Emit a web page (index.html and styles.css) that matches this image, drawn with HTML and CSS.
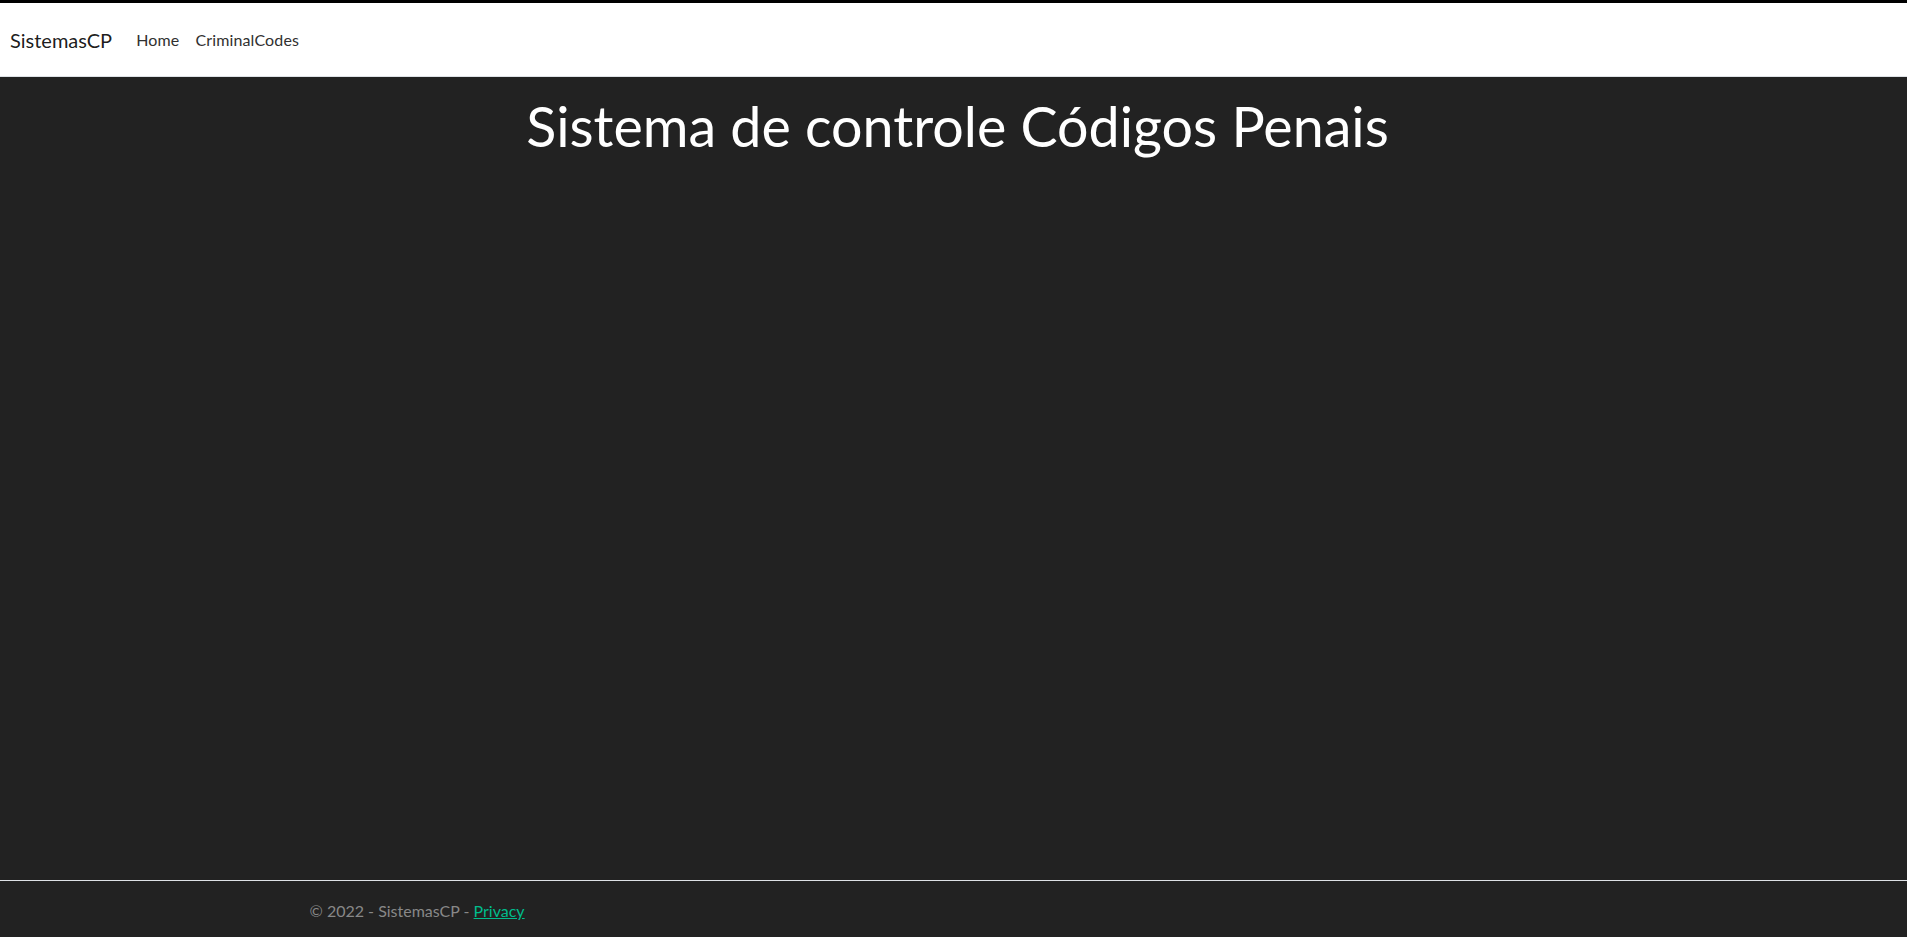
FILE: index.html
```html
<!DOCTYPE html>
<html lang="pt-br">
<head>
<meta charset="utf-8">
<title>SistemasCP</title>
<link rel="stylesheet" href="styles.css">
</head>
<body>
<div class="page">
  <div class="topstrip"></div>
  <header class="navbar">
    <div class="navbar-inner">
      <a class="brand" href="#">SistemasCP</a>
      <nav class="nav">
        <a class="nav-link" href="#">Home</a>
        <a class="nav-link" href="#">CriminalCodes</a>
      </nav>
    </div>
  </header>
  <main class="main">
    <div class="text-center">
      <h1 class="display">Sistema de controle Códigos Penais</h1>
    </div>
  </main>
  <footer class="footer">
    <div class="container">&copy; 2022 - SistemasCP - <a class="privacy" href="#">Privacy</a></div>
  </footer>
</div>
</body>
</html>
```

FILE: styles.css
```css
* { box-sizing: border-box; }
html, body {
  margin: 0;
  padding: 0;
  height: 100%;
  overflow: hidden;
}
body {
  background: #222222;
  color: #ffffff;
  font-family: Lato, "Liberation Sans", sans-serif;
  font-size: 16px;
  line-height: 1.5;
}
.page {
  display: flex;
  flex-direction: column;
  height: 100vh;
}
.topstrip {
  height: 3px;
  flex: 0 0 3px;
  background: #000000;
}
.navbar {
  flex: 0 0 auto;
  height: 74px;
  background: #ffffff;
  border-bottom: 1px solid #dee2e6;
  display: flex;
  align-items: center;
}
.navbar-inner {
  display: flex;
  align-items: center;
  padding: 0 12px 0 10px;
  width: 100%;
}
.brand {
  font-size: 20px;
  line-height: 30px;
  color: rgba(0, 0, 0, 0.9);
  text-decoration: none;
  margin-right: 16px;
}
.nav {
  display: flex;
  align-items: center;
}
.nav-link {
  color: #303030;
  text-decoration: none;
  padding: 8px;
  font-size: 16px;
  letter-spacing: 0.15px;
  line-height: 24px;
}
.main {
  flex: 1 1 auto;
  min-height: 0;
  padding: 16px 0 0 8px;
}
.text-center { text-align: center; }
.display {
  margin: 0;
  font-size: 55.6px;
  font-weight: 400;
  line-height: 1.2;
  color: #ffffff;
}
.footer {
  flex: 0 0 57px;
  height: 57px;
  border-top: 1px solid #dee2e6;
  line-height: 60px;
  white-space: nowrap;
  color: #888888;
  font-size: 16px;
}
.container {
  max-width: 1320px;
  margin: 0 auto;
  padding: 0 12px 0 16px;
}
.privacy {
  color: #00bc8c;
  text-decoration: underline;
}
```
